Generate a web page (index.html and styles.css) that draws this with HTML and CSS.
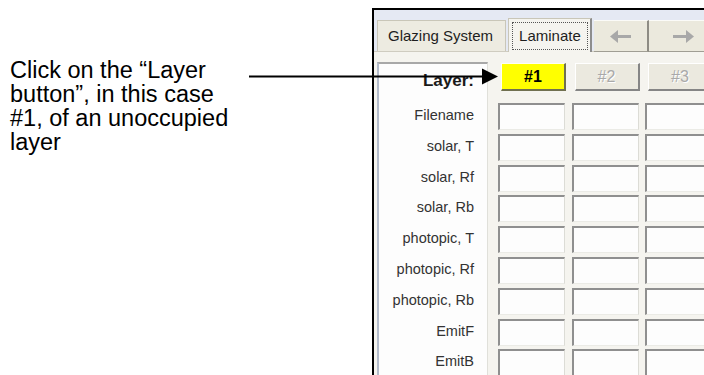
FILE: index.html
```html
<!DOCTYPE html>
<html lang="en">
<head>
    <meta charset="UTF-8">
    <meta name="viewport" content="width=device-width, initial-scale=1.0">
    <title>Laminate layers</title>
    <link rel="stylesheet" href="styles.css">
</head>
<body>
    <div class="page">
        <div class="note">
            <p>Click on the “Layer button”, in this case #1, of an unoccupied layer</p>
        </div>
        <div class="window">
            <div class="tabs">
                <div class="tab">Glazing System</div>
                <div class="tab active"><span>Laminate</span></div>
                <div class="scroll-btn left">
                    <svg width="21" height="13" viewBox="0 0 21 13"><polygon points="0,6.5 8,0 8,13" fill="#a8a8a8"/><rect x="8" y="5" width="13" height="3" fill="#a8a8a8"/></svg>
                </div>
                <div class="scroll-btn right">
                    <svg width="21" height="13" viewBox="0 0 21 13"><polygon points="21,6.5 13,0 13,13" fill="#a8a8a8"/><rect x="0" y="5" width="13" height="3" fill="#a8a8a8"/></svg>
                </div>
            </div>
            <div class="panel">
                <div class="labels">
                    <div class="label head">Layer:</div>
                    <div class="label">Filename</div>
                    <div class="label">solar, T</div>
                    <div class="label">solar, Rf</div>
                    <div class="label">solar, Rb</div>
                    <div class="label">photopic, T</div>
                    <div class="label">photopic, Rf</div>
                    <div class="label">photopic, Rb</div>
                    <div class="label">EmitF</div>
                    <div class="label">EmitB</div>
                </div>
                <div class="fields">
                    <div class="layer-btn on">#1</div>
                    <div class="layer-btn">#2</div>
                    <div class="layer-btn">#3</div>
                    <!-- Filename -->
                    <div class="box"></div><div class="box"></div><div class="box"></div>
                    <!-- solar -->
                    <div class="box"></div><div class="box"></div><div class="box"></div>
                    <div class="box"></div><div class="box"></div><div class="box"></div>
                    <div class="box"></div><div class="box"></div><div class="box"></div>
                    <!-- photopic -->
                    <div class="box"></div><div class="box"></div><div class="box"></div>
                    <div class="box"></div><div class="box"></div><div class="box"></div>
                    <div class="box"></div><div class="box"></div><div class="box"></div>
                    <!-- emissivity -->
                    <div class="box"></div><div class="box"></div><div class="box"></div>
                    <div class="box"></div><div class="box"></div><div class="box"></div>
                </div>
            </div>
        </div>
        <svg class="pointer" width="250" height="20" viewBox="0 0 250 20">
            <rect x="0" y="9.5" width="236" height="2" fill="#000"/>
            <polygon points="233,2.5 249,10.5 233,18.5" fill="#000"/>
        </svg>
    </div>
</body>
</html>
```

FILE: styles.css
```css
html, body{
    margin: 0;
    height: 375px;
    overflow: hidden;
    background: #fff;
}
.page{
    position: relative;
    display: flex;
    height: 375px;
}
.note{
    flex: none;
    width: 372px;
    box-sizing: border-box;
    padding: 58px 0 0 10px;
    font-family: "Liberation Sans", Arial, sans-serif;
    font-size: 23.5px;
    line-height: 24px;
    color: #000;
}
.note p{
    margin: 0;
    width: 230px;
}
.window{
    flex: 1;
    min-width: 0;
    margin-top: 8px;
    border-top: 2px solid #000;
    border-left: 2px solid #000;
    background: #f5f4ef;
    overflow: hidden;
    font-family: "Liberation Sans", Arial, sans-serif;
}

/* tab strip */
.tabs{
    display: flex;
    align-items: flex-end;
    height: 42px;
    box-sizing: border-box;
    padding-left: 3px;
    background: #e5e9f3;
    border-bottom: 1px solid #cfccc0;
}
.tab{
    flex: none;
    height: 31px;
    box-sizing: border-box;
    padding: 0 12px 0 10px;
    background: #edebe1;
    border: 1px solid #c9c6b8;
    border-bottom: none;
    font-size: 15px;
    line-height: 30px;
    color: #1e1e1e;
}
.tab.active{
    height: 34px;
    margin: 0 0 -1px 2px;
    padding: 3px 2px 3px 3px;
    background: #f5f4ef;
    border-right: 2px solid #8d8d8d;
}
.tab.active span{
    display: block;
    height: 28px;
    box-sizing: border-box;
    padding: 0 6px;
    border: 1px dotted #555;
    line-height: 26px;
}
.scroll-btn{
    flex: none;
    display: flex;
    align-items: center;
    justify-content: center;
    width: 55px;
    height: 32px;
    box-sizing: border-box;
    margin-bottom: -1px;
    background: #ebe9dd;
    border-top: 1px solid #fbfbf8;
    border-bottom: 1px solid #a09e94;
}
.scroll-btn.left{
    margin-left: 2px;
    border-right: 2px solid #8e8c84;
}
.scroll-btn.right{
    width: 70px;
}

/* layer table */
.panel{
    display: flex;
    gap: 10px;
    padding: 10px 0 0 3px;
}
.labels{
    flex: none;
    width: 111px;
    min-height: 330px;
    box-sizing: border-box;
    padding-right: 13px;
    background: #fdfdfd;
    border-top: 2px solid #a8a8a8;
    border-left: 2px solid #b4bccb;
    border-right: 1px solid #e0e0da;
}
.label{
    height: 27px;
    margin-bottom: 3.8px;
    text-align: right;
    white-space: nowrap;
    font-size: 14.5px;
    line-height: 25px;
    color: #333;
}
.label.head{
    height: 26px;
    margin-bottom: 13px;
    font-size: 17px;
    font-weight: bold;
    line-height: 34px;
    color: #1a1a1a;
}
.fields{
    flex: none;
    display: grid;
    grid-template-columns: repeat(3, 67px);
    grid-template-rows: 36.2px;
    grid-auto-rows: 27px;
    column-gap: 6.5px;
    row-gap: 3.8px;
    padding-top: 1px;
    align-content: start;
}
.layer-btn{
    align-self: start;
    display: flex;
    align-items: center;
    justify-content: center;
    width: 65px;
    height: 28px;
    box-sizing: border-box;
    margin-left: 3px;
    background: #ebe9df;
    border-top: 1px solid #fff;
    border-left: 1px solid #fff;
    border-right: 2px solid #858585;
    border-bottom: 2px solid #858585;
    font-size: 16px;
    color: #a9a9a9;
    text-shadow: 1px 1px #fff;
}
.layer-btn.on{
    background: #ffff00;
    color: #000;
    font-weight: bold;
    text-shadow: none;
    border-top-color: #fffff0;
    border-left-color: #fffff0;
    border-right-color: #707050;
    border-bottom-color: #707050;
}
.box{
    height: 27px;
    box-sizing: border-box;
    background: #fdfdfd;
    border-top: 2px solid #8f8f8f;
    border-left: 2px solid #8f8f8f;
    border-right: 1px solid #dcdcd6;
    border-bottom: 1px solid #ebebe6;
}

/* call-out arrow drawn over the dialog */
.pointer{
    position: absolute;
    left: 249px;
    top: 66px;
}
```
